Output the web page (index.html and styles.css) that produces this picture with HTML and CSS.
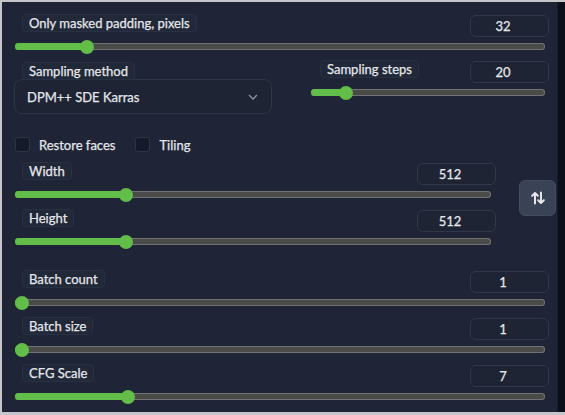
FILE: index.html
```html
<!DOCTYPE html>
<html>
<head>
<meta charset="utf-8">
<link rel="stylesheet" href="styles.css">
</head>
<body>
<div class="frame">
  <div class="panel">
    <div class="sl">
      <div class="sl-head"><span class="lbl">Only masked padding, pixels</span><span class="num">32</span></div>
      <div class="track" style="--p:0.126"><div class="fill"></div><div class="thumb"></div></div>
    </div>

    <div class="row2">
      <div class="col-left">
        <span class="lbl lbl-dd">Sampling method</span>
        <div class="dropdown">
          <span>DPM++ SDE Karras</span>
          <svg class="chev" width="10" height="6" viewBox="0 0 10 6"><polyline points="1,1 5,5 9,1" fill="none" stroke="#8b93a3" stroke-width="1.3"/></svg>
        </div>
      </div>
      <div class="col-right">
        <div class="sl">
          <div class="sl-head"><span class="lbl">Sampling steps</span><span class="num">20</span></div>
          <div class="track" style="--p:0.127"><div class="fill"></div><div class="thumb"></div></div>
        </div>
      </div>
    </div>

    <div class="checks">
      <label class="chk"><span class="box"></span>Restore faces</label>
      <label class="chk"><span class="box"></span>Tiling</label>
    </div>

    <div class="dims">
      <div class="dims-col">
        <div class="sl">
          <div class="sl-head"><span class="lbl">Width</span><span class="num">512</span></div>
          <div class="track" style="--p:0.225"><div class="fill"></div><div class="thumb"></div></div>
        </div>
        <div class="sl">
          <div class="sl-head"><span class="lbl">Height</span><span class="num">512</span></div>
          <div class="track" style="--p:0.225"><div class="fill"></div><div class="thumb"></div></div>
        </div>
      </div>
      <button class="swap">
        <svg width="14" height="14" viewBox="0 0 14 14"><g fill="none" stroke="#e5e7eb" stroke-width="2" stroke-linecap="round" stroke-linejoin="round"><path d="M4 12.5V2M1.2 4.8 4 2l2.8 2.8"/><path d="M10 1.5V12M7.2 9.2 10 12l2.8-2.8"/></g></svg>
      </button>
    </div>

    <div class="batch">
      <div class="sl">
        <div class="sl-head"><span class="lbl">Batch count</span><span class="num">1</span></div>
        <div class="track" style="--p:0"><div class="fill"></div><div class="thumb"></div></div>
      </div>
      <div class="sl">
        <div class="sl-head"><span class="lbl">Batch size</span><span class="num">1</span></div>
        <div class="track" style="--p:0"><div class="fill"></div><div class="thumb"></div></div>
      </div>
      <div class="sl">
        <div class="sl-head"><span class="lbl">CFG Scale</span><span class="num">7</span></div>
        <div class="track" style="--p:0.205"><div class="fill"></div><div class="thumb"></div></div>
      </div>
      <div class="next-edge"></div>
    </div>
  </div>
  <div class="strip"></div>
</div>
</body>
</html>
```
FILE: styles.css
```css
* { box-sizing: border-box; }
html, body { margin: 0; padding: 0; }
body {
  background: #c6c6ca;
  width: 565px;
  height: 415px;
  overflow: hidden;
  font-family: "Lato", "Noto Sans", sans-serif;
  font-size: 13px;
  color: #e4e6eb;
  -webkit-text-stroke: 0.25px #e4e6eb;
}
.frame {
  display: flex;
  height: 410px;
  margin: 2px 0 0 2px;
}
.panel {
  width: 555px;
  height: 410px;
  background: #1f2536;
  padding: 13px 8px 0 13px;
  overflow: hidden;
}
.strip {
  flex: 1;
  background: #0c101b;
  border-left: 1px solid #161b28;
}
.sl { display: block; }
.sl + .sl { margin-top: 12px; }
.sl-head {
  display: flex;
  justify-content: space-between;
  align-items: flex-start;
}
.lbl {
  display: inline-block;
  height: 18px;
  line-height: 17px;
  padding: 0 6px;
  margin: -1px 0 0 7px;
  background: #212838;
  border: 1px solid #283043;
  border-radius: 4px;
  white-space: nowrap;
}
.num {
  width: 79px;
  height: 22px;
  line-height: 21px;
  text-align: center;
  padding-right: 13px;
  border: 1px solid #30384a;
  border-radius: 6px;
  background: #1e2434;
}
.track {
  position: relative;
  height: 7px;
  margin: 6px 4px 0 0;
  border-radius: 4px;
  background: #4a4a49;
  box-shadow: inset 0 0 0 1px #727274;
}
.dims-col .track { margin-right: 5px; }
.fill {
  height: 100%;
  width: calc(7px + var(--p) * (100% - 14px));
  background: #62bd49;
  border-radius: 4px;
}
.thumb {
  position: absolute;
  top: 50%;
  left: calc(7px + var(--p) * (100% - 14px));
  width: 14px;
  height: 14px;
  border-radius: 50%;
  background: #62bd49;
  transform: translate(-50%, -50%);
}
.row2 {
  display: flex;
  margin-top: 11px;
}
.col-left {
  width: 258px;
  margin-left: -1px;
  display: flex;
  flex-direction: column;
  align-items: flex-start;
  padding-top: 1px;
}
.lbl-dd { margin: 0 0 0 8px; position: relative; z-index: 1; }
.dropdown {
  align-self: stretch;
  height: 35px;
  margin-top: -1px;
  border: 1px solid #2e3648;
  border-radius: 8px;
  background: #1e2434;
  display: flex;
  align-items: center;
  justify-content: space-between;
  padding: 0 13px 0 12px;
}
.chev { margin-top: 1px; }
.col-right {
  flex: 1;
  margin-left: 39px;
}
.col-right .lbl { margin-left: 9px; }
.checks {
  display: flex;
  align-items: center;
  margin-top: 23px;
  height: 15px;
}
.chk {
  display: flex;
  align-items: center;
  margin-right: 20px;
}
.box {
  width: 15px;
  height: 15px;
  margin-right: 9px;
  background: #141a29;
  border: 1px solid #2c3446;
  border-radius: 3px;
}
.dims {
  display: flex;
  align-items: flex-start;
  margin-top: 11px;
}
.dims-col {
  width: 481px;
}
.swap {
  width: 37px;
  height: 36px;
  margin: 17px -7px 0 23px;
  border: 1px solid #434c5e;
  border-radius: 6px;
  background: #3a4355;
  display: flex;
  align-items: center;
  justify-content: center;
  padding: 0;
}
.batch { margin-top: 26px; }
.next-edge {
  width: 79px;
  height: 22px;
  margin: 12px 0 0 auto;
  border: 1px solid #30384a;
  border-radius: 6px;
}
```
